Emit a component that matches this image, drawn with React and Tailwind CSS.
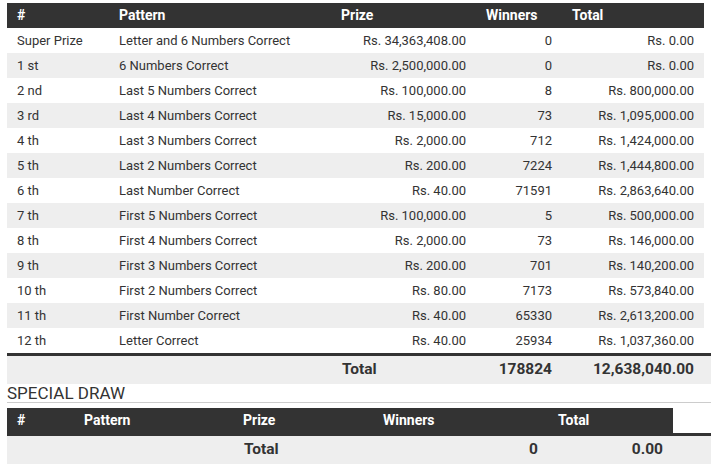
import React from "react";

const rows = [
  ["Super Prize", "Letter and 6 Numbers Correct", "Rs. 34,363,408.00", "0", "Rs. 0.00"],
  ["1 st", "6 Numbers Correct", "Rs. 2,500,000.00", "0", "Rs. 0.00"],
  ["2 nd", "Last 5 Numbers Correct", "Rs. 100,000.00", "8", "Rs. 800,000.00"],
  ["3 rd", "Last 4 Numbers Correct", "Rs. 15,000.00", "73", "Rs. 1,095,000.00"],
  ["4 th", "Last 3 Numbers Correct", "Rs. 2,000.00", "712", "Rs. 1,424,000.00"],
  ["5 th", "Last 2 Numbers Correct", "Rs. 200.00", "7224", "Rs. 1,444,800.00"],
  ["6 th", "Last Number Correct", "Rs. 40.00", "71591", "Rs. 2,863,640.00"],
  ["7 th", "First 5 Numbers Correct", "Rs. 100,000.00", "5", "Rs. 500,000.00"],
  ["8 th", "First 4 Numbers Correct", "Rs. 2,000.00", "73", "Rs. 146,000.00"],
  ["9 th", "First 3 Numbers Correct", "Rs. 200.00", "701", "Rs. 140,200.00"],
  ["10 th", "First 2 Numbers Correct", "Rs. 80.00", "7173", "Rs. 573,840.00"],
  ["11 th", "First Number Correct", "Rs. 40.00", "65330", "Rs. 2,613,200.00"],
  ["12 th", "Letter Correct", "Rs. 40.00", "25934", "Rs. 1,037,360.00"],
];

const cols = "grid grid-cols-[102px_222px_145px_86px_142px]";
const spCols = "grid grid-cols-[67px_159px_140px_175px_125px]";

export default function App() {
  return (
    <div
      className="bg-white w-[711px] h-[466px] overflow-hidden pl-[7px] pt-[3px] text-[#333333]"
      style={{ fontFamily: "Roboto, 'Liberation Sans', sans-serif" }}
    >
      {/* Main table */}
      <div className="w-[697px]">
        <div className={`${cols} h-[25px] items-center bg-[#333333] text-white font-bold text-[14px]`}>
          <div className="pl-[10px]">#</div>
          <div className="pl-[10px]">Pattern</div>
          <div className="pl-[10px]">Prize</div>
          <div className="pl-[10px]">Winners</div>
          <div className="pl-[10px]">Total</div>
        </div>
        {rows.map((r, i) => (
          <div
            key={i}
            className={`${cols} h-[25px] items-center text-[13px] ${i % 2 === 1 ? "bg-[#eeeeee]" : "bg-white"}`}
          >
            <div className="pl-[10px]">{r[0]}</div>
            <div className="pl-[10px]">{r[1]}</div>
            <div className="pr-[10px] text-right">{r[2]}</div>
            <div className="pr-[10px] text-right">{r[3]}</div>
            <div className="pr-[10px] text-right">{r[4]}</div>
          </div>
        ))}
      </div>
      <div className="w-[704px] border-t-[3px] border-[#333333] bg-[#eeeeee] h-[31px]">
        <div className={`${cols} h-[28px] items-center font-bold text-[15.5px]`}>
          <div></div>
          <div></div>
          <div className="pl-[11px]">Total</div>
          <div className="pr-[10px] text-right">178824</div>
          <div className="pr-[10px] text-right">12,638,040.00</div>
        </div>
      </div>

      {/* Special draw */}
      <div className="w-[704px] h-[18px] leading-[18px] text-[17px] font-normal border-b border-[#cccccc] box-content">
        SPECIAL DRAW
      </div>
      <div className="w-[704px] mt-[5px] border-b-[3px] border-[#333333]">
        <div className={`${spCols} w-[666px] h-[25px] items-center bg-[#333333] text-white font-bold text-[14px]`}>
          <div className="pl-[10px]">#</div>
          <div className="pl-[10px]">Pattern</div>
          <div className="pl-[10px]">Prize</div>
          <div className="pl-[10px]">Winners</div>
          <div className="pl-[10px]">Total</div>
        </div>
      </div>
      <div className="w-[704px] h-[28px] bg-[#eeeeee]">
        <div className={`${spCols} h-[28px] items-center font-bold text-[15.5px]`}>
          <div></div>
          <div></div>
          <div className="pl-[11px]">Total</div>
          <div className="pr-[10px] text-right">0</div>
          <div className="pr-[10px] text-right">0.00</div>
        </div>
      </div>
    </div>
  );
}
